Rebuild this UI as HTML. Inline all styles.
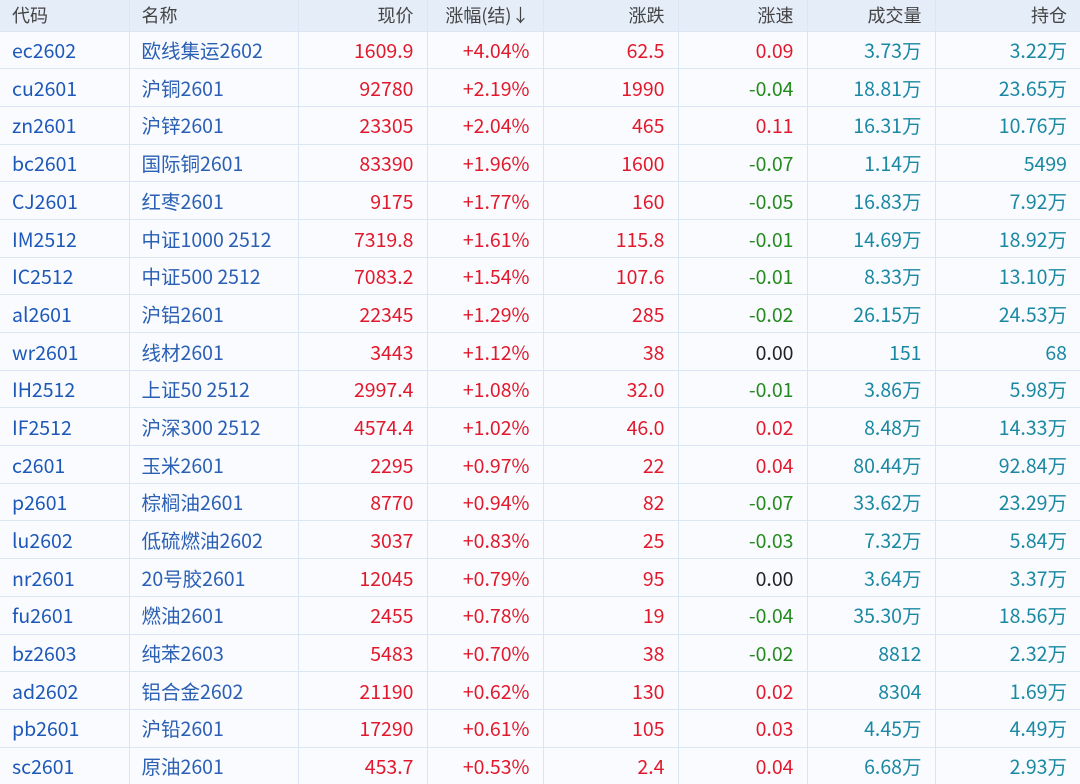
<!DOCTYPE html>
<html><head><meta charset="utf-8"><style>
html,body{margin:0;padding:0;width:1080px;height:784px;overflow:hidden;background:#f9fbfe}
table{border-collapse:collapse;table-layout:fixed;width:1080px;font-family:"Noto Sans CJK SC","Liberation Sans",sans-serif;font-size:19.5px;line-height:1}
td,th{border:1.5px solid #dbe6f4;padding:0 13px 0 12px;white-space:nowrap;overflow:hidden;height:36.2px;border-top:none;vertical-align:middle;box-sizing:border-box}
tr{height:37.7px}
tr.h{height:31px}
th{background:#e4edf8;font-weight:normal;color:#444;font-size:18px;height:31px}
td:first-child,th:first-child{border-left:none}
td:last-child,th:last-child{border-right:none}
.l{text-align:left}.r{text-align:right}
.b{color:#1d58b8}.n{color:#2a5fb4}.red{color:#e2192c}.g{color:#238a1c}.t{color:#1a88a3}.k{color:#222}
</style></head><body>
<table>
<colgroup><col style="width:129px"><col style="width:169px"><col style="width:129px"><col style="width:116px"><col style="width:135px"><col style="width:129px"><col style="width:128px"><col style="width:145px"></colgroup>
<tr class="h"><th class="l">代码</th><th class="l">名称</th><th class="r">现价</th><th class="r">涨幅(结)↓</th><th class="r">涨跌</th><th class="r">涨速</th><th class="r">成交量</th><th class="r">持仓</th></tr>
<tr><td class="b">ec2602</td><td class="n">欧线集运2602</td><td class="r red">1609.9</td><td class="r red">+4.04%</td><td class="r red">62.5</td><td class="r red">0.09</td><td class="r t">3.73万</td><td class="r t">3.22万</td></tr>
<tr><td class="b">cu2601</td><td class="n">沪铜2601</td><td class="r red">92780</td><td class="r red">+2.19%</td><td class="r red">1990</td><td class="r g">-0.04</td><td class="r t">18.81万</td><td class="r t">23.65万</td></tr>
<tr><td class="b">zn2601</td><td class="n">沪锌2601</td><td class="r red">23305</td><td class="r red">+2.04%</td><td class="r red">465</td><td class="r red">0.11</td><td class="r t">16.31万</td><td class="r t">10.76万</td></tr>
<tr><td class="b">bc2601</td><td class="n">国际铜2601</td><td class="r red">83390</td><td class="r red">+1.96%</td><td class="r red">1600</td><td class="r g">-0.07</td><td class="r t">1.14万</td><td class="r t">5499</td></tr>
<tr><td class="b">CJ2601</td><td class="n">红枣2601</td><td class="r red">9175</td><td class="r red">+1.77%</td><td class="r red">160</td><td class="r g">-0.05</td><td class="r t">16.83万</td><td class="r t">7.92万</td></tr>
<tr><td class="b">IM2512</td><td class="n">中证1000 2512</td><td class="r red">7319.8</td><td class="r red">+1.61%</td><td class="r red">115.8</td><td class="r g">-0.01</td><td class="r t">14.69万</td><td class="r t">18.92万</td></tr>
<tr><td class="b">IC2512</td><td class="n">中证500 2512</td><td class="r red">7083.2</td><td class="r red">+1.54%</td><td class="r red">107.6</td><td class="r g">-0.01</td><td class="r t">8.33万</td><td class="r t">13.10万</td></tr>
<tr><td class="b">al2601</td><td class="n">沪铝2601</td><td class="r red">22345</td><td class="r red">+1.29%</td><td class="r red">285</td><td class="r g">-0.02</td><td class="r t">26.15万</td><td class="r t">24.53万</td></tr>
<tr><td class="b">wr2601</td><td class="n">线材2601</td><td class="r red">3443</td><td class="r red">+1.12%</td><td class="r red">38</td><td class="r k">0.00</td><td class="r t">151</td><td class="r t">68</td></tr>
<tr><td class="b">IH2512</td><td class="n">上证50 2512</td><td class="r red">2997.4</td><td class="r red">+1.08%</td><td class="r red">32.0</td><td class="r g">-0.01</td><td class="r t">3.86万</td><td class="r t">5.98万</td></tr>
<tr><td class="b">IF2512</td><td class="n">沪深300 2512</td><td class="r red">4574.4</td><td class="r red">+1.02%</td><td class="r red">46.0</td><td class="r red">0.02</td><td class="r t">8.48万</td><td class="r t">14.33万</td></tr>
<tr><td class="b">c2601</td><td class="n">玉米2601</td><td class="r red">2295</td><td class="r red">+0.97%</td><td class="r red">22</td><td class="r red">0.04</td><td class="r t">80.44万</td><td class="r t">92.84万</td></tr>
<tr><td class="b">p2601</td><td class="n">棕榈油2601</td><td class="r red">8770</td><td class="r red">+0.94%</td><td class="r red">82</td><td class="r g">-0.07</td><td class="r t">33.62万</td><td class="r t">23.29万</td></tr>
<tr><td class="b">lu2602</td><td class="n">低硫燃油2602</td><td class="r red">3037</td><td class="r red">+0.83%</td><td class="r red">25</td><td class="r g">-0.03</td><td class="r t">7.32万</td><td class="r t">5.84万</td></tr>
<tr><td class="b">nr2601</td><td class="n">20号胶2601</td><td class="r red">12045</td><td class="r red">+0.79%</td><td class="r red">95</td><td class="r k">0.00</td><td class="r t">3.64万</td><td class="r t">3.37万</td></tr>
<tr><td class="b">fu2601</td><td class="n">燃油2601</td><td class="r red">2455</td><td class="r red">+0.78%</td><td class="r red">19</td><td class="r g">-0.04</td><td class="r t">35.30万</td><td class="r t">18.56万</td></tr>
<tr><td class="b">bz2603</td><td class="n">纯苯2603</td><td class="r red">5483</td><td class="r red">+0.70%</td><td class="r red">38</td><td class="r g">-0.02</td><td class="r t">8812</td><td class="r t">2.32万</td></tr>
<tr><td class="b">ad2602</td><td class="n">铝合金2602</td><td class="r red">21190</td><td class="r red">+0.62%</td><td class="r red">130</td><td class="r red">0.02</td><td class="r t">8304</td><td class="r t">1.69万</td></tr>
<tr><td class="b">pb2601</td><td class="n">沪铅2601</td><td class="r red">17290</td><td class="r red">+0.61%</td><td class="r red">105</td><td class="r red">0.03</td><td class="r t">4.45万</td><td class="r t">4.49万</td></tr>
<tr><td class="b">sc2601</td><td class="n">原油2601</td><td class="r red">453.7</td><td class="r red">+0.53%</td><td class="r red">2.4</td><td class="r red">0.04</td><td class="r t">6.68万</td><td class="r t">2.93万</td></tr>
</table>
</body></html>
